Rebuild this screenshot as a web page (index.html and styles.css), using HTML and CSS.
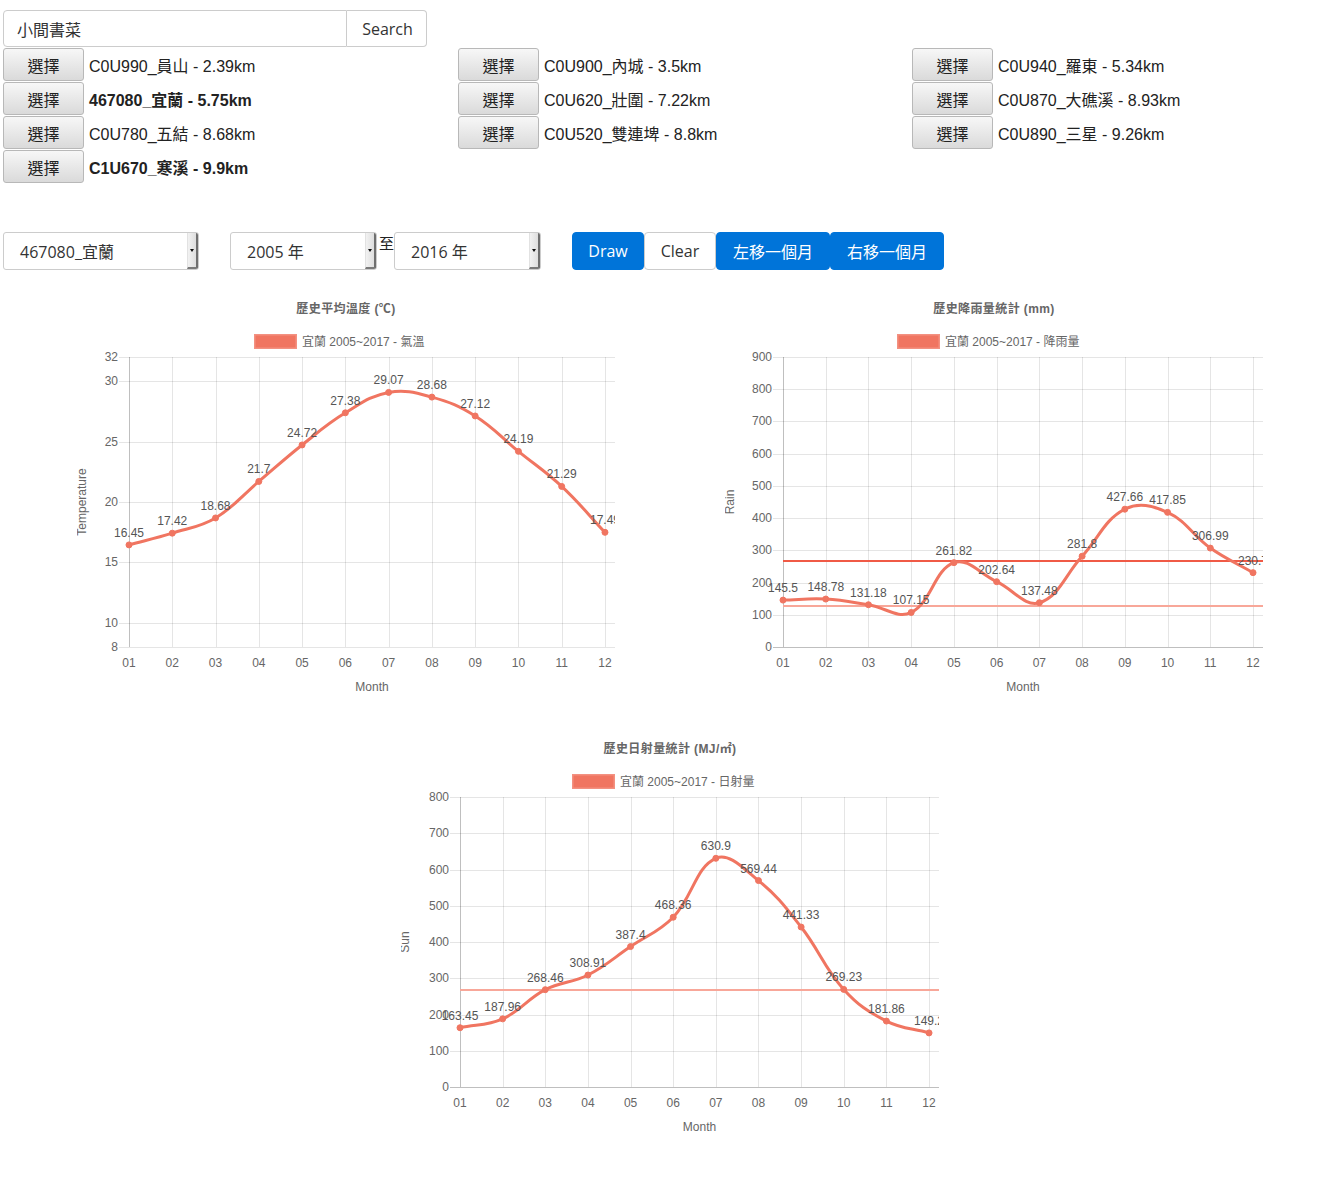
FILE: index.html
```html
<!DOCTYPE html>
<html lang="zh-Hant">
<head>
<meta charset="utf-8">
<title>歷史氣象統計</title>
<link rel="stylesheet" href="styles.css">
</head>
<body>
<div class="search">
  <div class="search-input">小間書菜</div>
  <button class="search-btn">Search</button>
</div>

<div class="stations">
  <div class="station"><button class="pick">選擇</button><span class="name">C0U990_員山 - 2.39km</span></div>
  <div class="station"><button class="pick">選擇</button><span class="name">C0U900_內城 - 3.5km</span></div>
  <div class="station"><button class="pick">選擇</button><span class="name">C0U940_羅東 - 5.34km</span></div>
  <div class="station"><button class="pick">選擇</button><span class="name bold">467080_宜蘭 - 5.75km</span></div>
  <div class="station"><button class="pick">選擇</button><span class="name">C0U620_壯圍 - 7.22km</span></div>
  <div class="station"><button class="pick">選擇</button><span class="name">C0U870_大礁溪 - 8.93km</span></div>
  <div class="station"><button class="pick">選擇</button><span class="name">C0U780_五結 - 8.68km</span></div>
  <div class="station"><button class="pick">選擇</button><span class="name">C0U520_雙連埤 - 8.8km</span></div>
  <div class="station"><button class="pick">選擇</button><span class="name">C0U890_三星 - 9.26km</span></div>
  <div class="station"><button class="pick">選擇</button><span class="name bold">C1U670_寒溪 - 9.9km</span></div>
</div>

<div class="controls">
  <div class="select select-station"><span class="select-text">467080_宜蘭</span><span class="select-arrow"></span></div>
  <div class="select select-year first-year"><span class="select-text">2005 年</span><span class="select-arrow"></span></div>
  <span class="to">至</span>
  <div class="select select-year"><span class="select-text">2016 年</span><span class="select-arrow"></span></div>
  <div class="btn-group">
    <button class="btn primary btn-short">Draw</button>
    <button class="btn default btn-short">Clear</button>
    <button class="btn primary btn-long">左移一個月</button>
    <button class="btn primary btn-long">右移一個月</button>
  </div>
</div>

<div class="chart-row">
  <div class="chart" id="chart-temp"></div>
  <div class="chart" id="chart-rain"></div>
</div>
<div class="chart-row single">
  <div class="chart" id="chart-sun"></div>
</div>

<script src="script.js"></script>
</body>
</html>
```

FILE: styles.css
```css
* {
  box-sizing: border-box;
}

body {
  margin: 0;
  background: #fff;
  color: #333;
  font-family: "Open Sans", "Noto Sans CJK TC", sans-serif;
}

button {
  font-family: inherit;
  cursor: pointer;
}

/* search */
.search {
  display: flex;
  width: 424px;
  height: 37px;
  margin: 10px 0 0 3px;
}

.search-input {
  width: 344px;
  border: 1px solid #ccc;
  border-radius: 4px 0 0 4px;
  padding: 0 13px;
  display: flex;
  align-items: center;
  font-size: 16px;
  color: #333;
}

.search-btn {
  width: 80px;
  border: 1px solid #ccc;
  border-left: 0;
  border-radius: 0 4px 4px 0;
  background: #fff;
  color: #333;
  font-size: 16px;
  padding: 0 0 0 2px;
}

/* stations */
.stations {
  display: grid;
  grid-template-columns: 455px 454px 1fr;
  margin: 1px 0 0 3px;
}

.station {
  display: flex;
  align-items: center;
  height: 34px;
}

.pick {
  width: 81px;
  height: 33px;
  margin-bottom: 1px;
  padding: 0;
  border: 1px solid #b8b8b8;
  border-radius: 3px;
  background: linear-gradient(#f7f7f7, #dadada);
  color: #222;
  font-family: "Noto Sans CJK TC", sans-serif;
  font-size: 16px;
}

.name {
  margin-left: 5px;
  font-family: "Liberation Sans", "Noto Sans CJK TC", sans-serif;
  font-size: 16px;
  color: #222;
}

.name.bold {
  font-weight: bold;
}

/* controls */
.controls {
  display: flex;
  align-items: flex-start;
  height: 38px;
  margin: 48px 0 0 3px;
}

.select {
  display: flex;
  height: 38px;
  border: 1px solid #ccc;
  border-radius: 3px;
  background: #fff;
  overflow: hidden;
}

.select-station {
  width: 196px;
}

.select-year {
  width: 147px;
}

.first-year {
  margin-left: 31px;
}

.select-text {
  flex: 1;
  display: flex;
  align-items: center;
  padding-left: 16px;
  font-size: 16px;
  color: #333;
}

.select-arrow {
  position: relative;
  width: 11px;
  background: linear-gradient(to right, #f2f2f2, #dedede);
  border-left: 1px solid #e2e2e2;
  border-right: 2px solid #6f6f6f;
  border-bottom: 2px solid #7a7a7a;
}

.select-arrow::after {
  content: "";
  position: absolute;
  left: 2px;
  top: 16px;
  border-left: 2.5px solid transparent;
  border-right: 2.5px solid transparent;
  border-top: 3px solid #111;
}

.to {
  width: 15px;
  font-family: "Noto Sans CJK TC", sans-serif;
  font-size: 15px;
  line-height: 22px;
  margin: 0 0 0 2px;
  color: #222;
}

.btn-group {
  display: flex;
  margin-left: 31px;
}

.btn {
  height: 38px;
  padding: 0;
  border-radius: 4px;
  font-size: 16px;
}

.btn-short {
  width: 72px;
}

.btn-long {
  width: 114px;
}

.primary {
  background: #0074d9;
  border: 1px solid #0074d9;
  color: #fff;
}

.default {
  background: #fff;
  border: 1px solid #ccc;
  color: #333;
}

/* charts */
.chart-row {
  display: flex;
  gap: 110px;
  padding-left: 77px;
  margin-top: 20px;
}

.chart-row.single {
  padding-left: 401px;
  margin-top: 30px;
}

.chart {
  width: 538px;
  height: 410px;
}

.chart svg {
  display: block;
}
```

FILE: script.js
```js
(function () {
  var NS = 'http://www.w3.org/2000/svg';
  var FONT = '"Liberation Sans", "Noto Sans CJK TC", "Noto Sans CJK SC", sans-serif';
  var LINE = '#f07561';

  function el(name, attrs, parent, text) {
    var e = document.createElementNS(NS, name);
    for (var k in attrs) e.setAttribute(k, attrs[k]);
    if (text !== undefined) e.textContent = text;
    if (parent) parent.appendChild(e);
    return e;
  }

  var charts = [
    {
      id: 'chart-temp', left: 77, top: 290,
      title: '歷史平均溫度 (℃)', titleX: 346, titleY: 313,
      legendX: 254, legendY: 341.5, legend: '宜蘭 2005~2017 - 氣溫',
      x0: 129, dx: 43.27, right: 615, yTop: 357, yBot: 647, min: 8, max: 32,
      ticks: [32, 30, 25, 20, 15, 10, 8],
      yLabel: 'Temperature', yLabelX: 86,
      data: [16.45, 17.42, 18.68, 21.7, 24.72, 27.38, 29.07, 28.68, 27.12, 24.19, 21.29, 17.49],
      lines: []
    },
    {
      id: 'chart-rain', left: 725, top: 290,
      title: '歷史降雨量統計 (mm)', titleX: 994, titleY: 313,
      legendX: 897, legendY: 341.5, legend: '宜蘭 2005~2017 - 降雨量',
      x0: 783, dx: 42.73, right: 1263, yTop: 357, yBot: 647, min: 0, max: 900,
      ticks: [900, 800, 700, 600, 500, 400, 300, 200, 100, 0],
      yLabel: 'Rain', yLabelX: 734,
      data: [145.5, 148.78, 131.18, 107.15, 261.82, 202.64, 137.48, 281.8, 427.66, 417.85, 306.99, 230.7],
      lines: [{ y: 561, color: '#f05a46' }, { y: 606, color: '#f8a799' }]
    },
    {
      id: 'chart-sun', left: 401, top: 730,
      title: '歷史日射量統計 (MJ/㎡)', titleX: 670, titleY: 753,
      legendX: 572, legendY: 781.5, legend: '宜蘭 2005~2017 - 日射量',
      x0: 460, dx: 42.64, right: 939, yTop: 797, yBot: 1087, min: 0, max: 800,
      ticks: [800, 700, 600, 500, 400, 300, 200, 100, 0],
      yLabel: 'Sun', yLabelX: 409,
      data: [163.45, 187.96, 268.46, 308.91, 387.4, 468.36, 630.9, 569.44, 441.33, 269.23, 181.86, 149.2],
      lines: [{ y: 990, color: '#f8a799' }]
    }
  ];

  function spline(prev, cur, next, t) {
    var d01 = Math.hypot(cur.x - prev.x, cur.y - prev.y);
    var d12 = Math.hypot(next.x - cur.x, next.y - cur.y);
    var s01 = d01 / (d01 + d12);
    var s12 = d12 / (d01 + d12);
    if (isNaN(s01)) s01 = 0;
    if (isNaN(s12)) s12 = 0;
    var fa = t * s01, fb = t * s12;
    return {
      prev: { x: cur.x - fa * (next.x - prev.x), y: cur.y - fa * (next.y - prev.y) },
      next: { x: cur.x + fb * (next.x - prev.x), y: cur.y + fb * (next.y - prev.y) }
    };
  }

  function clamp(v, a, b) { return Math.max(a, Math.min(b, v)); }

  charts.forEach(function (c) {
    var host = document.getElementById(c.id);
    var W = 538, H = 410;
    var svg = el('svg', {
      width: W, height: H,
      viewBox: c.left + ' ' + c.top + ' ' + W + ' ' + H,
      'font-family': FONT
    }, host);

    el('text', {
      x: c.titleX, y: c.titleY, 'text-anchor': 'middle',
      'font-size': 12, 'font-weight': 'bold', fill: '#666', 'letter-spacing': 0.4
    }, svg, c.title);

    el('rect', {
      x: c.legendX + 1.5, y: c.legendY - 6, width: 40, height: 12,
      fill: LINE, stroke: 'rgba(240,117,97,0.8)', 'stroke-width': 3
    }, svg);
    el('text', {
      x: c.legendX + 48, y: c.legendY + 4.5, 'font-size': 12, fill: '#666'
    }, svg, c.legend);

    function sy(v) {
      return c.yBot - (v - c.min) * (c.yBot - c.yTop) / (c.max - c.min);
    }

    c.ticks.forEach(function (t) {
      var y = Math.round(sy(t)) + 0.5;
      el('line', {
        x1: c.x0 - 10, x2: c.right, y1: y, y2: y,
        stroke: t === 0 ? 'rgba(0,0,0,0.25)' : 'rgba(0,0,0,0.1)', 'stroke-width': 1
      }, svg);
      el('text', {
        x: c.x0 - 11, y: sy(t) + 4, 'text-anchor': 'end', 'font-size': 12, fill: '#666'
      }, svg, String(t));
    });

    for (var i = 0; i < 12; i++) {
      var gx = Math.round(c.x0 + i * c.dx) + 0.5;
      el('line', {
        x1: gx, x2: gx, y1: c.yTop, y2: c.yBot,
        stroke: i === 0 ? 'rgba(0,0,0,0.25)' : 'rgba(0,0,0,0.1)', 'stroke-width': 1
      }, svg);
      el('text', {
        x: c.x0 + i * c.dx, y: c.yBot + 19.5, 'text-anchor': 'middle', 'font-size': 12, fill: '#666'
      }, svg, (i < 9 ? '0' : '') + (i + 1));
    }

    var cy = (c.yTop + c.yBot) / 2;
    el('text', {
      x: c.yLabelX, y: cy, 'text-anchor': 'middle', 'font-size': 12, fill: '#666',
      transform: 'rotate(-90 ' + c.yLabelX + ' ' + cy + ')'
    }, svg, c.yLabel);
    el('text', {
      x: (c.x0 + c.right) / 2, y: c.yBot + 44, 'text-anchor': 'middle', 'font-size': 12, fill: '#666'
    }, svg, 'Month');

    c.lines.forEach(function (l) {
      el('line', {
        x1: c.x0, x2: c.right, y1: l.y, y2: l.y, stroke: l.color, 'stroke-width': 2
      }, svg);
    });

    var pts = c.data.map(function (v, i) { return { x: c.x0 + i * c.dx, y: sy(v), v: v }; });
    var ctrl = pts.map(function (p, i) {
      var prev = pts[i - 1] || p;
      var next = pts[i + 1] || p;
      var s = spline(prev, p, next, 0.4);
      s.prev.x = clamp(s.prev.x, c.x0, c.right); s.prev.y = clamp(s.prev.y, c.yTop, c.yBot);
      s.next.x = clamp(s.next.x, c.x0, c.right); s.next.y = clamp(s.next.y, c.yTop, c.yBot);
      return s;
    });
    var d = 'M' + pts[0].x.toFixed(2) + ' ' + pts[0].y.toFixed(2);
    for (var j = 1; j < pts.length; j++) {
      d += ' C' + ctrl[j - 1].next.x.toFixed(2) + ' ' + ctrl[j - 1].next.y.toFixed(2) + ' ' +
        ctrl[j].prev.x.toFixed(2) + ' ' + ctrl[j].prev.y.toFixed(2) + ' ' +
        pts[j].x.toFixed(2) + ' ' + pts[j].y.toFixed(2);
    }
    el('path', {
      d: d, fill: 'none', stroke: LINE, 'stroke-width': 3,
      'stroke-linejoin': 'round', 'stroke-linecap': 'butt'
    }, svg);

    pts.forEach(function (p) {
      el('circle', { cx: p.x, cy: p.y, r: 3, fill: LINE, stroke: LINE, 'stroke-width': 1 }, svg);
    });

    pts.forEach(function (p) {
      el('text', {
        x: p.x, y: p.y - 8, 'text-anchor': 'middle', 'font-size': 12, fill: '#555'
      }, svg, String(p.v));
    });
  });
})();
```
